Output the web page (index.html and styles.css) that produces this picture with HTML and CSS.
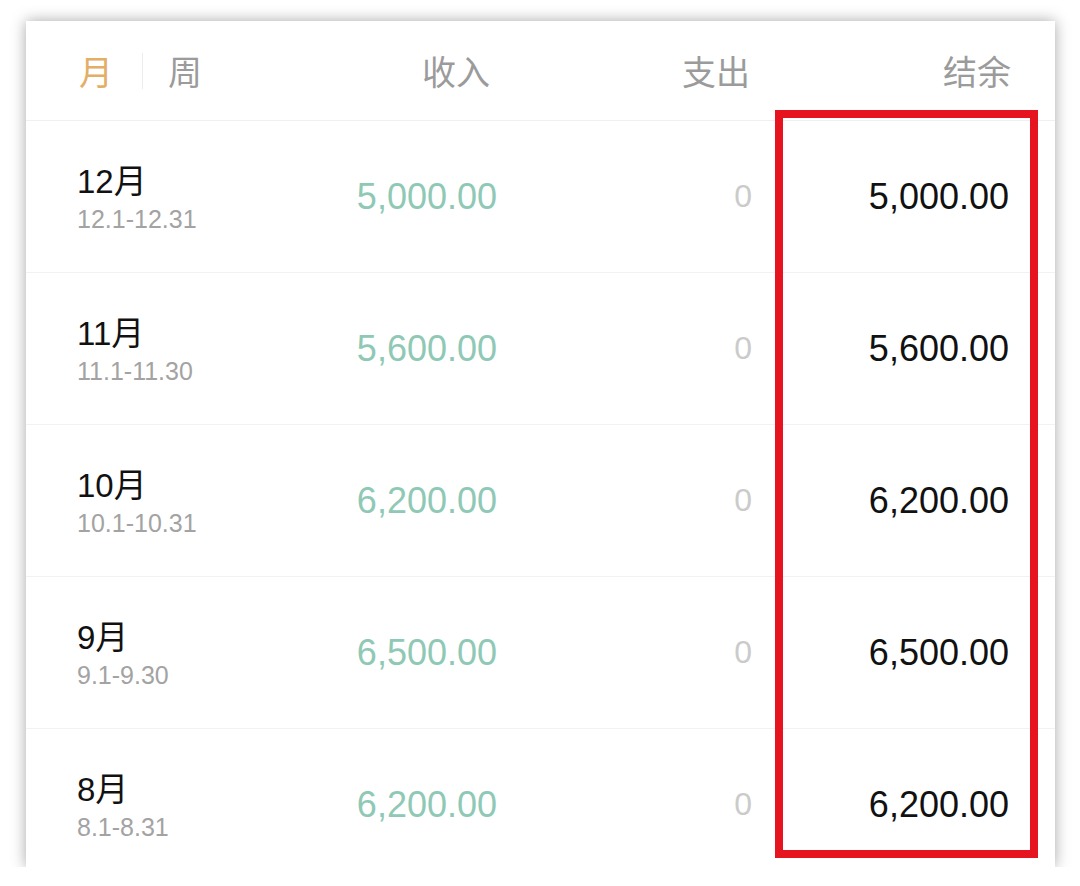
FILE: index.html
```html
<!DOCTYPE html>
<html lang="zh">
<head>
    <meta charset="UTF-8">
    <meta name="viewport" content="width=device-width, initial-scale=1.0">
    <title>月度结余</title>
    <link rel="stylesheet" href="styles.css">
</head>
<body>
    <div class="card">
        <div class="head">
            <div class="tabs">
                <span class="tab active">月</span>
                <span class="sep"></span>
                <span class="tab">周</span>
            </div>
            <div class="col in">收入</div>
            <div class="col out">支出</div>
            <div class="col rest">结余</div>
        </div>

        <div class="row">
            <div class="label">
                <div class="month">12月</div>
                <div class="range">12.1-12.31</div>
            </div>
            <div class="income">5,000.00</div>
            <div class="expense">0</div>
            <div class="balance">5,000.00</div>
        </div>
        <div class="row">
            <div class="label">
                <div class="month">11月</div>
                <div class="range">11.1-11.30</div>
            </div>
            <div class="income">5,600.00</div>
            <div class="expense">0</div>
            <div class="balance">5,600.00</div>
        </div>
        <div class="row">
            <div class="label">
                <div class="month">10月</div>
                <div class="range">10.1-10.31</div>
            </div>
            <div class="income">6,200.00</div>
            <div class="expense">0</div>
            <div class="balance">6,200.00</div>
        </div>
        <div class="row">
            <div class="label">
                <div class="month">9月</div>
                <div class="range">9.1-9.30</div>
            </div>
            <div class="income">6,500.00</div>
            <div class="expense">0</div>
            <div class="balance">6,500.00</div>
        </div>
        <div class="row">
            <div class="label">
                <div class="month">8月</div>
                <div class="range">8.1-8.31</div>
            </div>
            <div class="income">6,200.00</div>
            <div class="expense">0</div>
            <div class="balance">6,200.00</div>
        </div>

        <!-- annotation around the balance column -->
        <div class="mark"></div>
    </div>
</body>
</html>
```

FILE: styles.css
```css
body {
    margin: 0;
    padding: 0;
    background: #fff;
    font-family: "Liberation Sans", "Noto Sans CJK SC", sans-serif;
    color: #111;
}
.card {
    position: relative;
    width: 1029px;
    height: 846px;
    margin: 21px 0 0 26px;
    background: #fff;
    box-shadow: 0 0 14px rgba(0, 0, 0, 0.35);
    overflow: hidden;
}
.head, .row {
    display: grid;
    grid-template-columns: 220px 200px 255px 257px;
    align-items: center;
    padding: 0 46px 0 51px;
}
.head {
    height: 99px;
    border-bottom: 1px solid #f0f0f0;
    font-family: "Noto Sans CJK SC", sans-serif;
    font-size: 34px;
    color: #9b9b9b;
}
.tabs {
    display: flex;
    align-items: center;
    padding-left: 2px;
}
.tab.active {
    color: #e3ae66;
}
.sep {
    width: 1px;
    height: 36px;
    background: #ececec;
    margin: 0 25px 0 29px;
}
.col {
    text-align: right;
}
.col.in {
    padding-right: 7px;
}
.col.out {
    padding-right: 2px;
}
.col.rest {
    margin-right: -2px;
}
.row {
    height: 151px;
    border-bottom: 1px solid #f2f2f2;
}
.label {
    padding-top: 6px;
}
.month {
    font-size: 33px;
    line-height: 38px;
    color: #111;
}
.range {
    font-size: 25px;
    line-height: 36px;
    color: #a3a3a3;
}
.income, .expense, .balance {
    text-align: right;
    font-size: 36px;
}
.income {
    color: #8fc9b5;
}
.expense {
    color: #cbcbcb;
    font-size: 32px;
}
.balance {
    color: #111;
}
.mark {
    position: absolute;
    left: 749px;
    top: 89px;
    width: 247px;
    height: 732px;
    border: 8px solid #e6141e;
}
```
